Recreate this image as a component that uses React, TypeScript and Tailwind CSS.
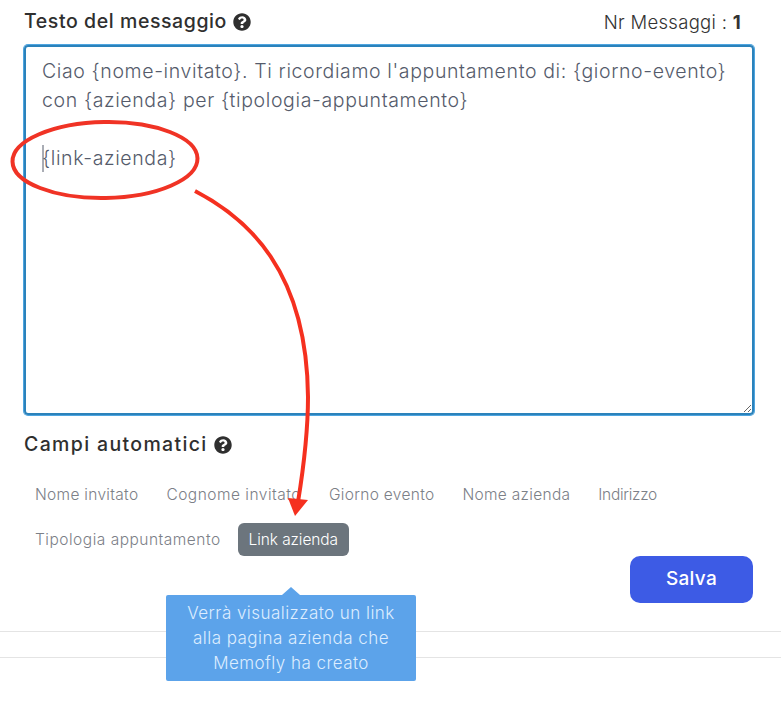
import { FaQuestionCircle } from "react-icons/fa";

const chipsA = [
  { label: "Nome invitato", fit: "tracking-[0.3px]" },
  { label: "Cognome invitato", fit: "tracking-[0.5px]" },
  { label: "Giorno evento", fit: "tracking-[0.3px]" },
  { label: "Nome azienda", fit: "tracking-[0.3px]" },
  { label: "Indirizzo", fit: "tracking-[-0.3px]" },
];

const chip = "h-[33px] px-[11px] rounded-md flex items-center text-[15.5px] font-light whitespace-nowrap";

export default function App() {
  return (
    <div className="relative w-[781px] h-[727px] bg-white overflow-hidden font-['Inter','Liberation_Sans',sans-serif]">
      <div className="pl-6 pr-7 pt-2">
        <div className="flex items-center justify-between h-7">
          <div className="flex items-center gap-[6px] text-[19.5px] font-medium text-[#2f2f2f] tracking-[0.58px]">
            Testo del messaggio
            <FaQuestionCircle className="w-[18px] h-[18px] text-[#2f2f2f]" />
          </div>
          <div className="text-[18.5px] font-light text-[#333] tracking-[0.3px] pr-[12px] pt-px">
            Nr Messaggi : <span className="font-bold">1</span>
          </div>
        </div>
        <textarea
          readOnly
          defaultValue={"Ciao {nome-invitato}. Ti ricordiamo l'appuntamento di: {giorno-evento}\ncon {azienda} per {tipologia-appuntamento}\n\n{link-azienda}"}
          className="block w-[730px] h-[370px] mt-[9px] pl-[16px] pr-2 pt-[10px] resize rounded-[4px] border-2 border-[#2b82bb] shadow-[0_0_0_1px_#4ea5e0] outline-none text-[19.5px] leading-[29px] tracking-[0.62px] font-light text-[#555b6b] font-['Inter','Liberation_Sans',sans-serif] whitespace-pre overflow-hidden"
        />
        <div className="flex items-center gap-[6px] mt-[16px] h-7 text-[19.5px] font-medium text-[#2f2f2f] tracking-[1.35px]">
          Campi automatici
          <FaQuestionCircle className="w-[18px] h-[18px] text-[#2f2f2f]" />
        </div>
        <div className="flex flex-wrap gap-x-[6px] gap-y-3 mt-[19px]">
          {chipsA.map((c) => (
            <div key={c.label} className={`${chip} ${c.fit} text-[#7c8087]`}>{c.label}</div>
          ))}
          <div className={`${chip} tracking-[0.5px] text-[#7c8087]`}>Tipologia appuntamento</div>
          <div className={`${chip} tracking-[-0.1px] bg-[#6c757d] text-white`}>Link azienda</div>
        </div>
        <div className="flex justify-end">
          <button className="w-[123px] h-[47px] rounded-[10px] bg-[#3d5be5] text-white text-[19px] font-medium tracking-[0.3px]">
            Salva
          </button>
        </div>
      </div>
      <div className="mt-7 border-t border-[#e4e4e4] h-[26px]" />
      <div className="border-t border-[#e4e4e4]" />

      {/* Tooltip */}
      <div className="absolute left-[166px] top-[595px] w-[250px] h-[86px] rounded-[2px] bg-[#5ca3ea] text-[#dcedff] text-[17px] tracking-[0.45px] leading-[25px] font-light text-center pt-[6px]">
        <div className="absolute left-[116px] -top-2 w-0 h-0 border-l-[9px] border-r-[9px] border-b-[8px] border-l-transparent border-r-transparent border-b-[#5ca3ea]" />
        Verrà visualizzato un link
        <br />
        alla pagina azienda che
        <br />
        Memofly ha creato
      </div>

      {/* Hand-drawn annotation */}
      <svg className="absolute inset-0 pointer-events-none" width="781" height="727" viewBox="0 0 781 727" fill="none">
        <line x1="43" y1="145" x2="43" y2="172" stroke="#555b6b" strokeWidth="1" />
        <ellipse cx="105" cy="160" rx="92.5" ry="38" stroke="#f03325" strokeWidth="4" transform="rotate(-1 105 160)" />
        <path d="M195 191 C 247 218 307 270 308 397 C 308 430 304 465 298 502" stroke="#f5301f" strokeWidth="4" />
        <polygon points="288,498 308,500 295,516" fill="#f5301f" />
      </svg>
    </div>
  );
}
